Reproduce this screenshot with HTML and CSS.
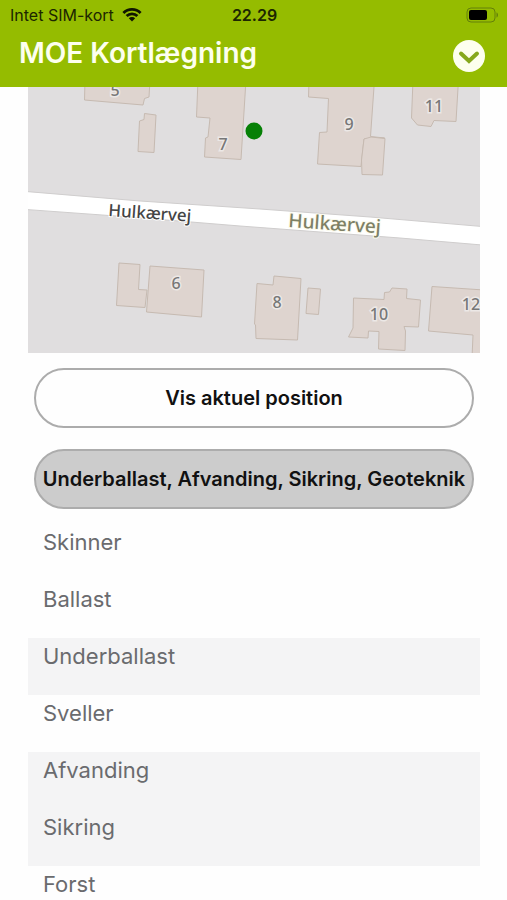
FILE: index.html
```html
<!DOCTYPE html>
<html lang="da">
<head>
<meta charset="utf-8">
<meta name="viewport" content="width=device-width, initial-scale=1">
<title>MOE Kortlægning</title>
<link rel="stylesheet" href="styles.css">
</head>
<body>
<header class="header">
  <div class="status">
    <div class="carrier">
      <span>Intet SIM-kort</span>
      <svg class="wifi" viewBox="0 0 20 15" aria-hidden="true">
        <path d="M0.4 4.9a13.6 13.6 0 0 1 19.2 0l-2 2a10.8 10.8 0 0 0-15.2 0z"/>
        <path d="M3.6 8.1a9.1 9.1 0 0 1 12.8 0l-2 2a6.3 6.3 0 0 0-8.8 0z"/>
        <path d="M6.8 11.3a4.6 4.6 0 0 1 6.4 0L10 14.5z"/>
      </svg>
    </div>
    <time class="clock">22.29</time>
    <svg class="battery" viewBox="0 0 33 16" aria-hidden="true">
      <rect class="battery-case" x="1" y="1" width="28" height="14" rx="4"/>
      <rect x="3" y="3" width="18" height="10" rx="2"/>
      <path class="battery-tip" d="M30.5 5.5c2 .6 2 4.400 0 5z"/>
    </svg>
  </div>
  <div class="titlebar">
    <h1 class="title">MOE Kortlægning</h1>
    <button class="menu" type="button" aria-label="Menu">
      <svg viewBox="0 0 32 32" aria-hidden="true"><path d="M8 13.500l8 7.500 8-7.500"/></svg>
    </button>
  </div>
</header>
<main class="content">
  <svg class="map" viewBox="28 87 452 266" role="img" aria-label="Kort over Hulkærvej">
    <rect class="land" x="28" y="87" width="452" height="266"/>
    <path class="road" d="M26 191.500L140 201L260 209L370 217L482 226.500V245L400 238L240 226L130 217L26 209.500z"/>
    <g class="buildings">
      <path d="M85 80L84.500 100L143 105L144.500 98.500L149 97L150 80z"/>
      <path d="M144.500 113.500L156 115L154 152.500L138 151.500L139.500 121L144 119.500z"/>
      <path d="M198 80L196.500 117L210 118L208 137L205.500 138L204.500 157L241 159.500L246 80z"/>
      <path d="M309 80L308.500 97L328.500 98.500L327 132L319.500 132.500L317.500 164L361 166.500L364 139L384.500 138L370.500 136.500L374.500 80z"/>
      <path d="M364 139L371 137L385 138.500L382.500 175L362 174.500L361.500 160z"/>
      <path d="M413 80L411.500 118L417.500 125L431 126.500L434 120.500L456 121.500L458.500 80z"/>
      <path d="M119 263L140 264.500L138.500 289.500L147 290L145 307.500L116.500 305.500z"/>
      <path d="M150 266L204 270L201.500 317L146.500 312z"/>
      <path d="M257 283.500L273 285L274 276L301 278.500L297.500 340L256 338.500L255.500 325L254.500 324z"/>
      <path d="M308 288L320.500 289L318.500 314.500L306 313.500z"/>
      <path d="M353.500 298L384 299.500L384.500 292.500L389.500 292L392 288L407 289L406.500 298.500L420.500 300L418.500 327L404 326.500L405.500 331L405 350.500L378.500 349L379 331.500L368.500 331L368 338L348.500 337L353 328z"/>
      <path d="M432 286.500L484 290V370H471.500L473 335L428.500 331z"/>
    </g>
    <g class="numbers">
      <text x="115" y="96">5</text>
      <text x="223" y="150">7</text>
      <text x="349" y="130">9</text>
      <text x="434" y="112">11</text>
      <text x="176" y="289">6</text>
      <text x="277" y="308">8</text>
      <text x="379" y="320">10</text>
      <text x="471" y="310">12</text>
    </g>
    <text class="street" x="108" y="216" transform="rotate(4 108 216)">Hulkærvej</text>
    <text class="street street-alt" x="288" y="227" transform="rotate(4 288 227)">Hulkærvej</text>
    <circle class="marker" cx="254" cy="131" r="8.500"/>
  </svg>
  <div class="actions">
    <button class="pill" type="button">Vis aktuel position</button>
    <button class="pill pill-active" type="button">Underballast, Afvanding, Sikring, Geoteknik</button>
  </div>
  <ul class="subjects">
    <li><button class="subject" type="button" aria-pressed="false">Skinner</button></li>
    <li><button class="subject" type="button" aria-pressed="false">Ballast</button></li>
    <li><button class="subject" type="button" aria-pressed="true">Underballast</button></li>
    <li><button class="subject" type="button" aria-pressed="false">Sveller</button></li>
    <li><button class="subject" type="button" aria-pressed="true">Afvanding</button></li>
    <li><button class="subject" type="button" aria-pressed="true">Sikring</button></li>
    <li><button class="subject" type="button" aria-pressed="false">Forst</button></li>
  </ul>
</main>
</body>
</html>
```
FILE: styles.css
```css
* {
  box-sizing: border-box;
}

body {
  display: flex;
  flex-direction: column;
  height: 100vh;
  margin: 0;
  overflow: hidden;
  background: #fefefe;
  font-family: Inter, "Liberation Sans", sans-serif;
}

button {
  font-family: inherit;
  cursor: pointer;
}

.header {
  flex: none;
  padding-bottom: 14px;
  background: #95bc00;
}

.status {
  display: grid;
  grid-template-columns: 1fr auto 1fr;
  align-items: center;
  height: 29px;
  padding: 0 8px 0 10px;
  color: #1c2600;
  font-size: 16px;
}

.carrier {
  display: flex;
  align-items: center;
  gap: 8px;
}

.wifi {
  width: 20px;
  height: 15px;
  fill: #101600;
}

.clock {
  font-weight: 600;
}

.battery {
  justify-self: end;
  width: 33px;
  height: 16px;
  fill: #000;
}

.battery-case {
  fill: none;
  stroke: #64800a;
  stroke-width: 1;
}

.battery-tip {
  fill: #64800a;
}

.titlebar {
  display: flex;
  align-items: center;
  justify-content: space-between;
  height: 44px;
  padding: 0 22px 0 19px;
}

.title {
  margin: 0;
  padding-top: 4px;
  color: #fdffee;
  font-size: 28px;
  font-weight: 600;
  line-height: 32px;
}

.menu {
  width: 32px;
  height: 32px;
  margin-top: 10px;
  padding: 0;
  border: 0;
  border-radius: 50%;
  background: #fdffee;
}

.menu svg {
  display: block;
  fill: none;
  stroke: #86a81c;
  stroke-width: 4;
  stroke-linecap: round;
}

.content {
  flex: 1;
  min-height: 0;
  padding: 0 27px 0 28px;
  overflow-y: auto;
  scrollbar-width: none;
}

.map {
  display: block;
  width: 100%;
}

.land {
  fill: #e0dedf;
}

.road {
  fill: #fff;
  stroke: #cfcdcd;
  stroke-width: 1;
}

.buildings {
  fill: #ded4cf;
  stroke: #c6bab1;
  stroke-width: 1;
}

.numbers {
  fill: #777;
  stroke: #ece8e6;
  stroke-width: 3;
  paint-order: stroke;
  font-family: "Noto Sans", sans-serif;
  font-size: 16px;
  font-weight: 500;
  text-anchor: middle;
}

.street {
  fill: #444;
  stroke: #fff;
  stroke-width: 2;
  paint-order: stroke;
  font-family: "Noto Sans", sans-serif;
  font-size: 17px;
  font-weight: 500;
}

.street-alt {
  fill: #7e8065;
  stroke: #fafaec;
  font-size: 19px;
}

.marker {
  fill: #068006;
}

.actions {
  display: grid;
  gap: 21px;
  padding: 15px 6px;
}

.pill {
  height: 60px;
  padding: 0;
  border: 2px solid #acacac;
  border-radius: 30px;
  background: #fefefe;
  color: #111;
  font-size: 20px;
  font-weight: 600;
  white-space: nowrap;
}

.pill-active {
  background: #ccc;
}

.subjects {
  margin: 0;
  padding: 0;
  list-style: none;
}

.subject {
  display: block;
  width: 100%;
  height: 57px;
  padding: 4px 15px 25px;
  border: 0;
  background: transparent;
  color: #6a6b6e;
  font-size: 22px;
  line-height: 28px;
  text-align: left;
}

.subject[aria-pressed="true"] {
  background: #f4f4f5;
}
```
